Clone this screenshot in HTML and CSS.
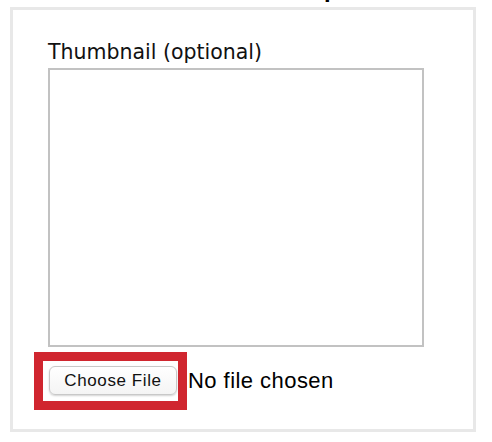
FILE: index.html
```html
<!DOCTYPE html>
<html>
<head>
<meta charset="utf-8">
<link rel="stylesheet" href="styles.css">
</head>
<body>
<h2 class="heading">Setup</h2>
<div class="panel">
  <label class="field-label">Thumbnail (optional)</label>
  <div class="preview"></div>
  <div class="file-row">
    <div class="highlight">
      <button class="file-btn" type="button">Choose File</button>
    </div>
    <span class="file-status">No file chosen</span>
  </div>
</div>
</body>
</html>
```
FILE: styles.css
```css
html, body {
  margin: 0;
  padding: 0;
  background: #fff;
}
body {
  width: 492px;
  height: 442px;
  overflow: hidden;
}
.heading {
  margin: -25px 0 0 0;
  height: 28px;
  line-height: 28px;
  padding-left: 272px;
  font-family: "Liberation Sans", Arial, sans-serif;
  font-weight: bold;
  font-size: 24px;
  color: #000;
}
.panel {
  margin: 4px 0 0 10px;
  width: 460px;
  height: 419px;
  border: 3px solid #e8e8e8;
  box-sizing: content-box;
  display: flex;
  flex-direction: column;
  align-items: flex-start;
  padding: 0;
}
.field-label {
  margin: 30px 0 0 35px;
  font-family: "DejaVu Sans", Verdana, sans-serif;
  font-size: 20.5px;
  line-height: 25px;
  color: #111;
}
.preview {
  margin: 3px 0 0 35px;
  width: 372px;
  height: 275px;
  border: 2px solid #c2c2c2;
  background: #fff;
}
.file-row {
  margin: 5px 0 0 21px;
  display: flex;
  align-items: center;
}
.highlight {
  border: 9px solid #d0262f;
  padding: 5px 1px 6px 6px;
  display: flex;
}
.file-btn {
  width: 128px;
  height: 29px;
  padding: 0;
  border: 1px solid #c8c8c8;
  border-radius: 6px;
  background: linear-gradient(#ffffff, #f4f4f4);
  box-shadow: 0 1px 2px rgba(0,0,0,0.18);
  font-family: "Liberation Sans", Arial, sans-serif;
  font-size: 17px;
  letter-spacing: 0.6px;
  color: #111;
}
.file-status {
  margin-left: 1px;
  font-family: "Liberation Sans", Arial, sans-serif;
  font-size: 22px;
  letter-spacing: 0.45px;
  color: #000;
}
```
